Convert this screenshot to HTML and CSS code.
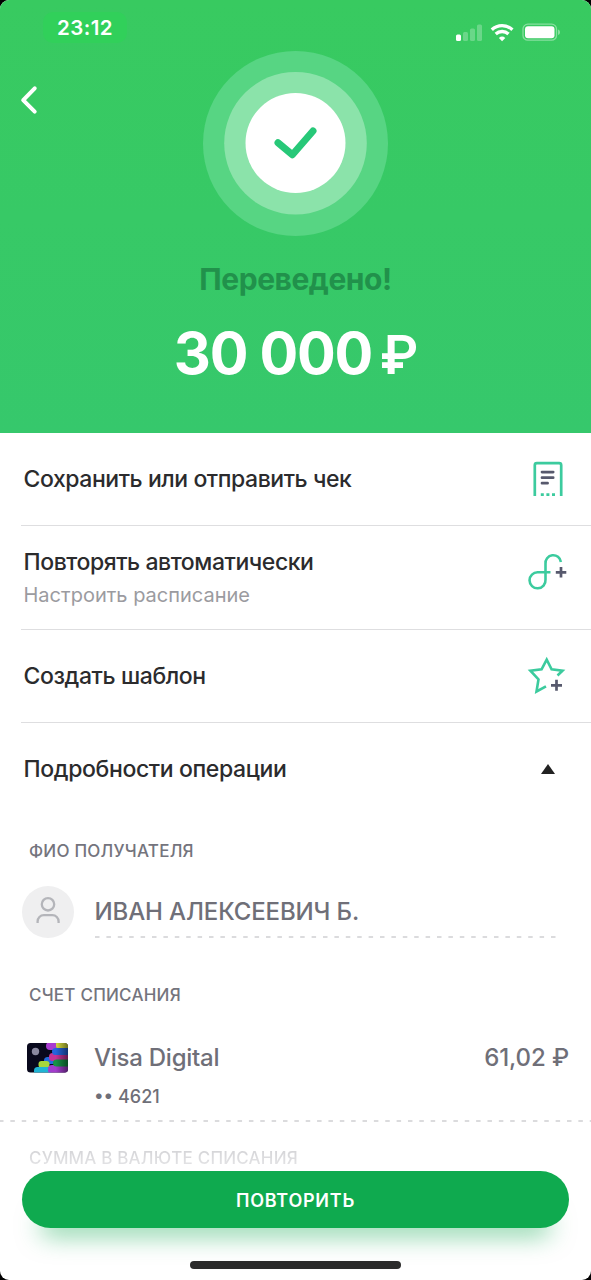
FILE: index.html
```html
<!DOCTYPE html>
<html lang="ru">
<head>
<meta charset="utf-8">
<title>Переведено</title>
<link rel="stylesheet" href="styles.css">
</head>
<body>
<main class="screen">
  <header class="hero">
    <div class="status">
      <span class="clock">23:12</span>
      <svg class="indicators" width="106" height="20" viewBox="0 0 106 20" fill="#fff">
        <rect x="1" y="11.500" width="5" height="6.500" rx="1.500"/>
        <g opacity=".25"><rect x="8" y="9" width="5" height="9" rx="1.500"/><rect x="15" y="5.500" width="5" height="12.500" rx="1.500"/><rect x="22" y="1.500" width="5" height="16.500" rx="1.500"/></g>
        <g fill="none" stroke="#fff" stroke-width="3.300"><path d="M36.800 6.700a15 15 0 0 1 20.600 0"/><path d="M40.700 11a9.500 9.500 0 0 1 12.800 0"/></g>
        <path d="M47.100 18.200l-3.200-3.300a4.800 4.800 0 0 1 6.400 0z"/>
        <rect x="68" y="1.200" width="33.500" height="16" rx="4.800" fill="none" stroke="#fff" stroke-opacity=".4" stroke-width="1.300"/>
        <rect x="70" y="3.200" width="29.500" height="12" rx="3"/>
        <path d="M103.200 6.500v5.500c2.200-.8 2.200-4.700 0-5.500z" opacity=".5"/>
      </svg>
    </div>
    <div class="badge-row">
      <svg class="back" width="20" height="32" viewBox="0 0 20 32"><path d="M15.700 3.300L4.200 15.100l11.500 11.600" fill="none" stroke="#fff" stroke-width="4" stroke-linecap="round" stroke-linejoin="round"/></svg>
      <svg class="badge" width="185" height="185" viewBox="0 0 185 185">
        <circle cx="92.500" cy="92.500" r="92.500" fill="#57d583"/>
        <circle cx="92.500" cy="92.200" r="71.300" fill="#8be3aa"/>
        <circle cx="92.500" cy="92" r="50" fill="#fff"/>
        <path d="M75 91.800l14.400 12L110 80" fill="none" stroke="#27c878" stroke-width="7" stroke-linecap="round" stroke-linejoin="round"/>
      </svg>
    </div>
    <h1 class="title">Переведено!</h1>
    <p class="amount">30 000<span class="rouble">₽</span></p>
  </header>

  <nav class="actions">
    <div class="action">
      <span class="label save">Сохранить или отправить чек</span>
      <svg class="icon" width="42" height="42" viewBox="0 0 42 42" fill="none">
        <path d="M8.800 38V7.200Q8.800 5.200 10.800 5.200H33.200Q35.200 5.200 35.200 7.200V38" stroke="#3ccb9e" stroke-width="2.700"/>
        <path d="M16 14.100h11.200M16 19.700h11.200M16 25.200h5.600" stroke="#57596d" stroke-width="2.700" stroke-linecap="round"/>
        <path d="M14.800 36.700h3M20.400 36.700h3M26 36.700h3" stroke="#3ccb9e" stroke-width="2.700"/>
      </svg>
    </div>
    <div class="action tall">
      <span class="label"><span class="repeat">Повторять автоматически</span><small class="hint">Настроить расписание</small></span>
      <svg class="icon" width="42" height="42" viewBox="0 0 42 42" fill="none">
        <path d="M24.500 15.300H11.800A8 8 0 1 0 19.500 22.600V6.900A7.700 7.700 0 0 1 34.900 5" stroke="#3ccb9e" stroke-width="2.600"/>
        <path d="M29.800 15.300h10.500M35 10.100v10.500" stroke="#57596d" stroke-width="2.700"/>
      </svg>
    </div>
    <div class="action">
      <span class="label create">Создать шаблон</span>
      <svg class="icon" width="42" height="42" viewBox="0 0 42 42" fill="none">
        <path d="M20 31.300L10.500 36.500L12.500 24.300L4.400 15.700L15.600 14.300L20.700 4.600L25.600 14.300L36.500 15.700L31.500 20.500" stroke="#3ccb9e" stroke-width="2.600"/>
        <path d="M25 30.300h11M30.500 24.800v11" stroke="#57596d" stroke-width="2.700"/>
      </svg>
    </div>
    <div class="action details">
      <span class="label more">Подробности операции</span>
      <svg class="toggle" width="16" height="12" viewBox="0 0 16 12"><path d="M8 0l7 10H1z" fill="#222"/></svg>
    </div>
  </nav>

  <section class="recipient">
    <h2 class="caption">ФИО ПОЛУЧАТЕЛЯ</h2>
    <div class="person">
      <svg class="avatar" width="52" height="52" viewBox="0 0 52 52" fill="none">
        <circle cx="26" cy="26" r="26" fill="#efeff0"/>
        <g stroke="#b4b5ba" stroke-width="2.300"><circle cx="26" cy="18.300" r="6.200"/><path d="M15.600 37v-1.600a6.200 6.200 0 0 1 6.200-6.200h8.600a6.200 6.200 0 0 1 6.200 6.200V37"/></g>
      </svg>
      <div class="name"><span class="fio">ИВАН АЛЕКСЕЕВИЧ Б.</span><svg class="dash" width="461" height="2"><path d="M0 1h461" stroke="#cfcfd2" stroke-width="1.400" stroke-dasharray="4.500 6.900"/></svg></div>
    </div>
  </section>

  <section class="account">
    <h2 class="caption from">СЧЕТ СПИСАНИЯ</h2>
    <div class="card-row">
      <svg class="card" width="41" height="30" viewBox="0 0 41 30">
        <defs>
          <clipPath id="edge"><rect width="41" height="29.500" rx="3.500"/></clipPath>
          <linearGradient id="shade"><stop offset=".7" stop-color="#000" stop-opacity="0"/><stop offset="1" stop-color="#000" stop-opacity=".5"/></linearGradient>
        </defs>
        <g clip-path="url(#edge)">
          <rect width="41" height="30" fill="#09091d"/>
          <circle cx="8.500" cy="8.500" r="3.700" fill="#8a88a0"/>
          <rect x="19" y="-1" width="15" height="8" rx="4" fill="#a83bd0"/>
          <rect x="29" y="-2" width="16" height="8" rx="3.500" fill="#d5dc3f"/>
          <rect x="17" y="14" width="15" height="7" rx="3.500" fill="#246bdc"/>
          <rect x="22" y="10" width="22" height="8" rx="3.500" fill="#c43296"/>
          <rect x="25" y="5" width="20" height="7" rx="3.500" fill="#2464dd"/>
          <rect x="11.500" y="18" width="11" height="7" rx="3" fill="#a7d63c"/>
          <rect x="7" y="24" width="17" height="8" rx="3.500" fill="#20b4d4"/>
          <rect x="21" y="22" width="22" height="9" rx="4" fill="#a23ccc"/>
          <rect x="26" y="16.500" width="20" height="7" rx="3.500" fill="#169445"/>
          <rect width="41" height="30" fill="url(#shade)"/>
        </g>
      </svg>
      <div class="product"><span class="visa">Visa Digital</span><span class="digits">•• 4621</span></div>
      <span class="balance">61,02 ₽</span>
    </div>
    <svg class="rule" width="591" height="2"><path d="M0 1h591" stroke="#cfcfd2" stroke-width="1.400" stroke-dasharray="4.500 6.860" stroke-dashoffset="1"/></svg>
    <h2 class="caption sum">СУММА В ВАЛЮТЕ СПИСАНИЯ</h2>
  </section>

  <footer class="footer">
    <button class="again">ПОВТОРИТЬ</button>
    <div class="home"></div>
  </footer>
</main>
</body>
</html>
```
FILE: styles.css
```css
* { box-sizing: border-box; margin: 0; }
body { background: #000; font-family: Inter, "Noto Sans", sans-serif; color: #2b2b2d; }
.screen { width: 591px; height: 1280px; display: flex; flex-direction: column; background: #fff; border-radius: 9px; overflow: hidden; }

.hero { height: 433px; background: linear-gradient(#38ca60, #36c86c); color: #fff; }
.status { height: 51px; padding: 12px 30px 0 43px; display: flex; justify-content: space-between; align-items: flex-start; }
.clock { width: 84px; height: 31px; border-radius: 10px; background: #31d05a; text-align: center; line-height: 31px; font-size: 20.5px; font-weight: 600; letter-spacing: .4px; }
.indicators { margin-top: 11px; }
.badge-row { display: grid; grid-template-columns: 1fr 185px 1fr; }
.back { margin: 34px 0 0 19px; }
.title { margin-top: 25px; line-height: 36px; font-size: 30px; font-weight: 700; letter-spacing: -.45px; text-align: center; color: #21914b; }
.amount { margin-top: 21px; line-height: 70px; font-size: 57.5px; font-weight: 650; letter-spacing: -1.3px; text-align: center; white-space: nowrap; }
.rouble { margin-left: 8px; font-size: 53px; font-weight: 600; }

.action { height: 93px; margin-left: 21px; padding: 0 23px 0 2.500px; border-bottom: 1.500px solid #dedee0; display: flex; align-items: center; justify-content: space-between; }
.icon { overflow: visible; }
.tall { height: 104px; }
.details { border: 0; padding-right: 35px; }
.label { display: flex; flex-direction: column; font-size: 23px; line-height: 30px; font-weight: 450; letter-spacing: -.44px; }
.create { letter-spacing: -.4px; }
.more { margin-top: -1px; letter-spacing: -.37px; }
.hint { margin-top: 4px; font-size: 20px; line-height: 28px; font-weight: 400; letter-spacing: 0; color: #9b9ba0; }

.caption { padding-left: 29px; font-size: 17px; line-height: 22px; font-weight: 550; letter-spacing: .23px; color: #74747d; white-space: nowrap; }
.recipient { margin-top: 24px; }
.person { margin: 24px 0 0 21.500px; display: flex; gap: 21px; }
.name { padding-top: 11px; display: flex; flex-direction: column; gap: 9px; font-size: 24px; line-height: 30px; font-weight: 550; color: #6f6f78; }
.fio { letter-spacing: -.12px; }
.account { margin-top: 46px; }
.card-row { margin-top: 37px; padding: 0 22px 0 27px; display: flex; align-items: flex-start; font-size: 24px; line-height: 30px; font-weight: 550; color: #6f6f78; }
.product { margin-left: 26px; flex: 1; display: flex; flex-direction: column; }
.visa { letter-spacing: -.25px; }
.balance { letter-spacing: -.1px; }
.digits { margin-top: 11px; font-size: 18px; line-height: 26px; }
.rule { display: block; margin-top: 10px; }
.sum { margin-top: 25px; letter-spacing: .18px; color: transparent; background: linear-gradient(#d2d2d5, #e6e6e8) text; }
.footer { margin-top: 2px; display: flex; flex-direction: column; align-items: center; }
.again { width: 547px; height: 57px; border: 0; border-radius: 29px; background: #0faa4f; color: #fff; font: 600 18px/57px Inter, sans-serif; letter-spacing: .75px; box-shadow: 0 26px 24px -18px rgba(15, 170, 79, .5); }
.home { margin-top: 33px; width: 211px; height: 8px; border-radius: 4px; background: #2b2b2b; }
```
